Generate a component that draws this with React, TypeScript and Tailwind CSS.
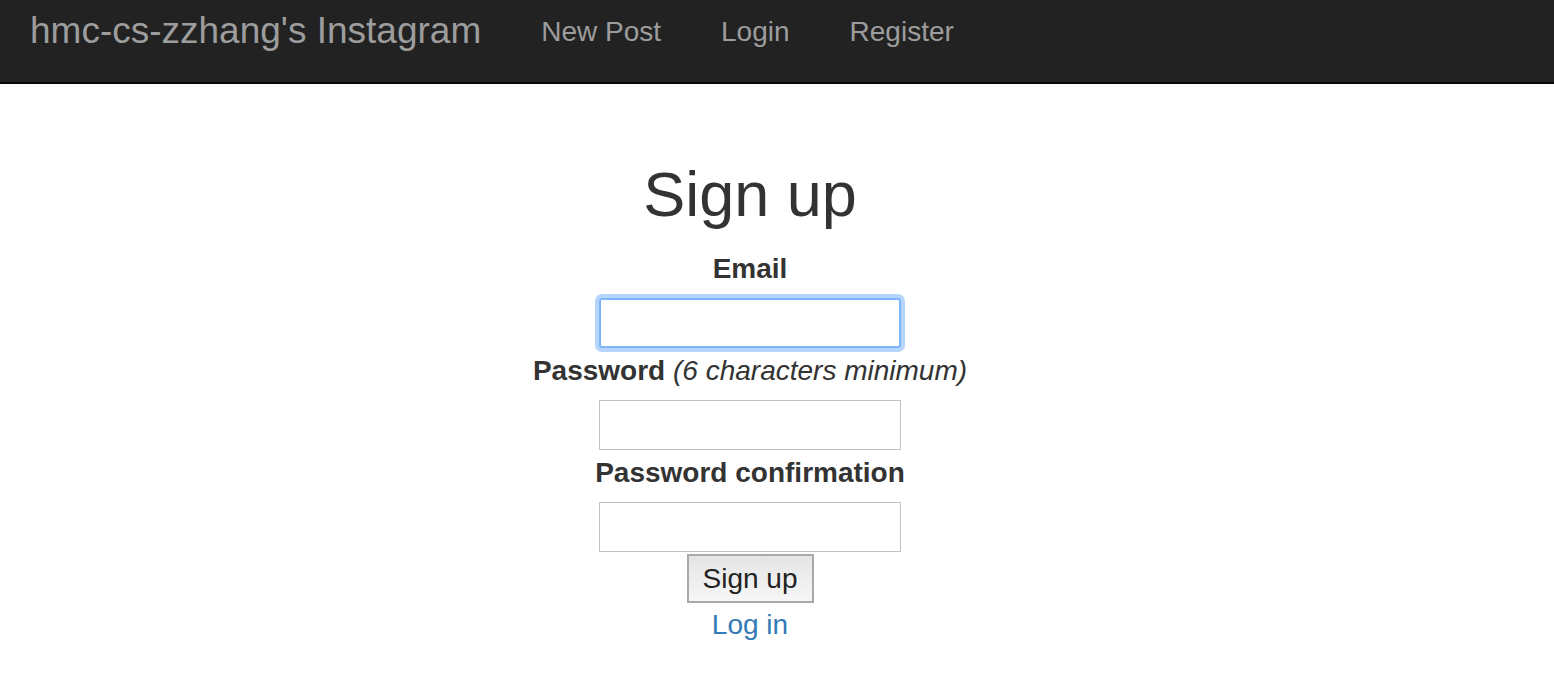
import React from "react";

export default function App() {
  return (
    <div className="min-h-screen bg-white text-[#333]" style={{ fontFamily: '"Liberation Sans", Arial, Helvetica, sans-serif' }}>
      <nav className="flex h-[84px] items-start border-b-2 border-[#080808] bg-[#222]">
        <a className="block pl-[30px] pr-[30px] pt-[11px] text-[37px] leading-[40px] text-[#9d9d9d]">hmc-cs-zzhang's Instagram</a>
        <a className="block px-[30px] pt-[12px] text-[28px] leading-[40px] text-[#9d9d9d]">New Post</a>
        <a className="block px-[30px] pt-[12px] text-[28px] leading-[40px] text-[#9d9d9d]">Login</a>
        <a className="block px-[30px] pt-[12px] text-[28px] leading-[40px] text-[#9d9d9d]">Register</a>
      </nav>
      <div className="flex flex-col items-center pr-[54px]">
        <h1 className="mt-[77px] text-[63px] font-normal leading-[66px] text-[#333]">Sign up</h1>
        <label className="mt-[19px] mb-[10px] box-border h-[42px] pt-[4px] text-[28px] font-bold leading-[38px]">Email</label>
        <input
          type="email"
          className="box-border h-[50px] w-[302px] rounded-[3px] border-2 border-[#7eb4fa] bg-white shadow-[0_0_0_4px_#b5d5fc] outline-none"
        />
        <label className="mb-[10px] box-border h-[42px] pt-[4px] text-[28px] font-bold leading-[38px]">
          Password <em className="font-normal">(6 characters minimum)</em>
        </label>
        <input type="password" className="box-border h-[50px] w-[302px] border border-[#c2c2c2] bg-white outline-none" />
        <label className="mb-[10px] box-border h-[42px] pt-[4px] text-[28px] font-bold leading-[38px]">Password confirmation</label>
        <input type="password" className="box-border h-[50px] w-[302px] border border-[#c2c2c2] bg-white outline-none" />
        <button className="mt-[2px] box-border h-[49px] w-[127px] border-2 border-[#a9a9a9] bg-gradient-to-b from-[#e5e5e5] to-[#f6f6f6] text-[28px] leading-[40px] text-[#222]">
          Sign up
        </button>
        <a className="h-[40px] pt-[2px] text-[28px] leading-[40px] text-[#337ab7]">Log in</a>
      </div>
    </div>
  );
}
